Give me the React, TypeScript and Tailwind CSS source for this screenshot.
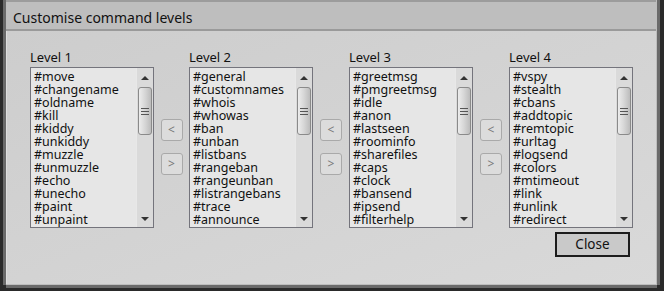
const levels: string[][] = [
  ["#move", "#changename", "#oldname", "#kill", "#kiddy", "#unkiddy", "#muzzle", "#unmuzzle", "#echo", "#unecho", "#paint", "#unpaint"],
  ["#general", "#customnames", "#whois", "#whowas", "#ban", "#unban", "#listbans", "#rangeban", "#rangeunban", "#listrangebans", "#trace", "#announce"],
  ["#greetmsg", "#pmgreetmsg", "#idle", "#anon", "#lastseen", "#roominfo", "#sharefiles", "#caps", "#clock", "#bansend", "#ipsend", "#filterhelp"],
  ["#vspy", "#stealth", "#cbans", "#addtopic", "#remtopic", "#urltag", "#logsend", "#colors", "#mtimeout", "#link", "#unlink", "#redirect"],
];

const ScrollBar = () => (
  <div className="w-[17px] h-full flex flex-col bg-[#dadada] border-l border-[#e8e8e8]">
    <div className="h-[19px] flex items-center justify-center">
      <svg width="8" height="5" viewBox="0 0 8 5"><path d="M0 5 L4 1 L8 5 Z" fill="#333" /></svg>
    </div>
    <div className="mx-[1px] h-[48px] rounded-[3px] border border-[#8a8a8a] bg-gradient-to-r from-[#ececec] via-[#d6d6d6] to-[#bcbcbc] flex flex-col items-center justify-center gap-[2px]">
      <div className="w-[8px] h-[1px] bg-[#555]" />
      <div className="w-[8px] h-[1px] bg-[#555]" />
      <div className="w-[8px] h-[1px] bg-[#555]" />
    </div>
    <div className="flex-1" />
    <div className="h-[16px] flex items-center justify-center">
      <svg width="8" height="5" viewBox="0 0 8 5"><path d="M0 0 L4 4 L8 0 Z" fill="#333" /></svg>
    </div>
  </div>
);

const LevelList = ({ title, items }: { title: string; items: string[] }) => (
  <div className="w-[124px] flex flex-col">
    <div className="h-[17px] text-[13px] leading-[15px] text-[#111]">{title}</div>
    <div className="h-[161px] border border-[#74747c] bg-[#e6e6e6] flex">
      <div className="flex-1 pl-[3px] pt-[2px] overflow-hidden">
        {items.map(item => (
          <div key={item} className="text-[12.5px] leading-[13px] text-[#111] whitespace-nowrap">{item}</div>
        ))}
      </div>
      <ScrollBar />
    </div>
  </div>
);

const MoveButtons = ({ width }: { width: string }) => (
  <div className={`${width} flex flex-col items-center pt-[69px] gap-[12px]`}>
    <button className="w-[22px] h-[22px] rounded-[3px] border border-[#a9a9a9] bg-[#dcdcdc] text-[12px] text-[#777] leading-none">&lt;</button>
    <button className="w-[22px] h-[22px] rounded-[3px] border border-[#a9a9a9] bg-[#dcdcdc] text-[12px] text-[#777] leading-none">&gt;</button>
  </div>
);

export default function App() {
  return (
    <div
      className="w-[664px] h-[291px] bg-[#2a2a2a] pl-[6px] pr-[7px] pb-[6px] flex flex-col"
      style={{ fontFamily: '"Noto Sans", "Open Sans", sans-serif' }}
    >
      <div className="flex-1 flex flex-col shadow-[-3px_0_0_#6a6a6a,3px_0_0_#6a6a6a,0_3px_0_#6a6a6a] border-r border-b border-[#bdbdbd]">
        <div className="h-[31px] bg-[#bebebe] border-t-2 border-t-[#9c9c9c] border-b-2 border-[#9a9a9a] pl-[7px] pt-[3px] flex items-center text-[14px] text-[#111]">
          Customise command levels
        </div>
        <div className="flex-1 bg-gradient-to-br from-[#cdcdcd] to-[#d9d9d9] border-l border-[#dedede] pl-[23px] pt-[19px] flex flex-col">
          <div className="flex">
            <LevelList title="Level 1" items={levels[0]} />
            <MoveButtons width="w-[35px]" />
            <LevelList title="Level 2" items={levels[1]} />
            <MoveButtons width="w-[36px]" />
            <LevelList title="Level 3" items={levels[2]} />
            <MoveButtons width="w-[36px]" />
            <LevelList title="Level 4" items={levels[3]} />
          </div>
          <div className="flex justify-end w-[600px] mt-[4px]">
            <button className="w-[75px] h-[25px] border-2 border-[#1c1c1c] bg-[#c9c9c9] text-[13.5px] text-[#111] leading-none">
              Close
            </button>
          </div>
        </div>
      </div>
    </div>
  );
}
